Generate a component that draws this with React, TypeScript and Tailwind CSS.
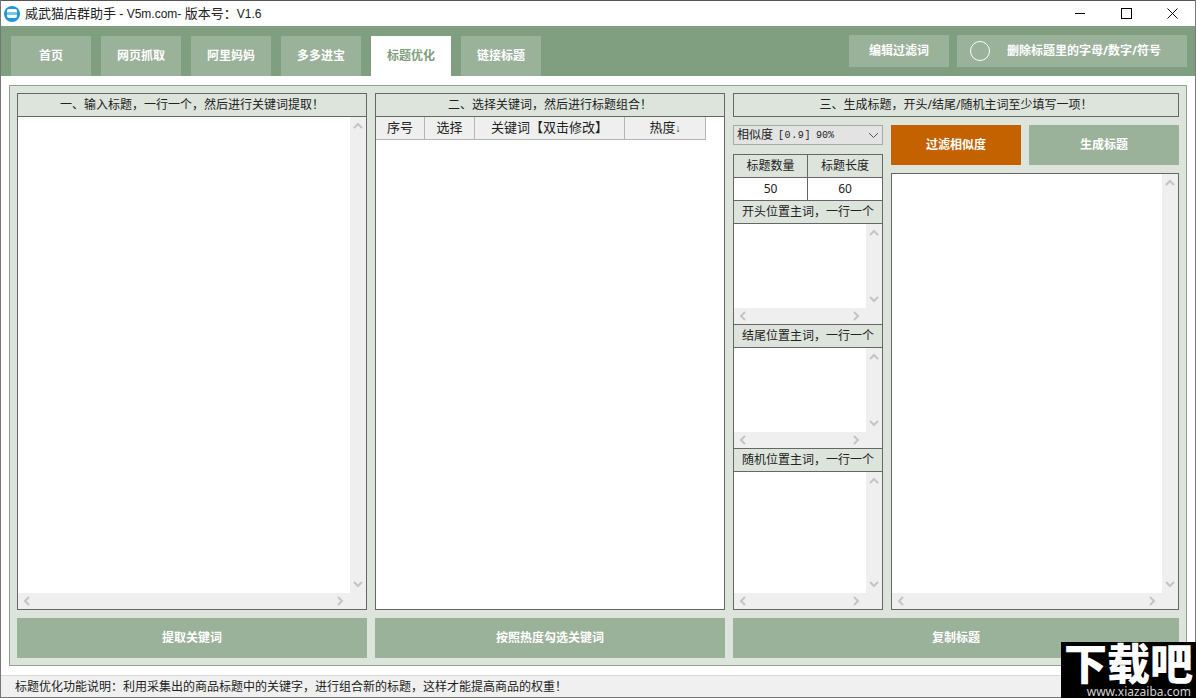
import React from "react";

const font = { fontFamily: '"Noto Sans", "Noto Sans CJK SC", sans-serif' };

function Chev({ dir }: { dir: "up" | "down" | "left" | "right" }) {
  const d = {
    up: "M1 6 L5 2 L9 6",
    down: "M1 2 L5 6 L9 2",
    left: "M6 1 L2 5 L6 9",
    right: "M2 1 L6 5 L2 9",
  }[dir];
  const vertical = dir === "up" || dir === "down";
  return (
    <svg width={vertical ? 10 : 8} height={vertical ? 8 : 10} viewBox={vertical ? "0 0 10 8" : "0 0 8 10"} fill="none" stroke="#c4c4c4" strokeWidth="2">
      <path d={d} />
    </svg>
  );
}

function ScrollBox({ className = "" }: { className?: string }) {
  return (
    <div className={`flex flex-col bg-[#efefef] border border-[#666666] min-h-0 ${className}`}>
      <div className="flex flex-1 min-h-0">
        <div className="flex-1 bg-white" />
        <div className="w-[16px] flex flex-col items-center justify-between py-[5px]">
          <Chev dir="up" />
          <Chev dir="down" />
        </div>
      </div>
      <div className="h-[16px] flex items-center justify-between pl-[5px] pr-[22px]">
        <Chev dir="left" />
        <Chev dir="right" />
      </div>
    </div>
  );
}

function Head({ children, className = "h-[24px]" }: { children: React.ReactNode; className?: string }) {
  return (
    <div className={`shrink-0 flex items-center justify-center bg-[#dde4dc] border border-[#666666] text-[12px] text-[#222222] whitespace-nowrap ${className}`}>
      {children}
    </div>
  );
}

function GreenBtn({ children, className = "" }: { children: React.ReactNode; className?: string }) {
  return (
    <div className={`flex items-center justify-center bg-[#9ab19a] text-white text-[12px] font-bold ${className}`}>
      {children}
    </div>
  );
}

function Tab({ children, active }: { children: React.ReactNode; active?: boolean }) {
  return (
    <div className={`w-[80px] h-[40px] flex items-center justify-center text-[12px] font-bold ${active ? "bg-white text-[#7f9f80]" : "bg-[#9ab19a] text-white"}`}>
      {children}
    </div>
  );
}

export default function App() {
  return (
    <div style={font} className="w-[1196px] h-[698px] flex flex-col bg-white border-x border-[#777777] relative">
      {/* title bar */}
      <div className="h-[26px] shrink-0 flex items-center bg-white border-t border-[#555555]">
        <div className="ml-[3px] w-[16px] h-[16px] rounded-full bg-[#2196d8] flex items-center justify-center">
          <div className="w-[10px] h-[9px] bg-white rounded-[2px] flex items-center">
            <div className="w-full h-[3px] bg-[#7cc4ea]" />
          </div>
        </div>
        <span className="ml-[5px] text-[12px] text-[#222222] whitespace-nowrap">
          <span className="text-[13px]">威武猫店群助手</span>
          <span className="font-['Liberation_Sans']"> - V5m.com- </span>
          <span className="text-[13px]">版本号：</span>
          <span className="font-['Liberation_Sans']">V1.6</span>
        </span>
        <div className="ml-auto flex items-center h-full">
          <div className="w-[46px] flex justify-center"><div className="w-[10px] h-px bg-black" /></div>
          <div className="w-[46px] flex justify-center"><div className="w-[11px] h-[11px] border border-black" /></div>
          <div className="w-[46px] flex justify-center">
            <svg width="11" height="11" viewBox="0 0 11 11" stroke="#111" strokeWidth="1"><path d="M0.5 0.5 L10.5 10.5 M10.5 0.5 L0.5 10.5" /></svg>
          </div>
        </div>
      </div>

      {/* tab bar */}
      <div className="h-[50px] shrink-0 bg-[#7f9f80] flex pl-[10px] pr-[8px]">
        <div className="flex items-end gap-[10px]">
          <Tab>首页</Tab>
          <Tab>网页抓取</Tab>
          <Tab>阿里妈妈</Tab>
          <Tab>多多进宝</Tab>
          <Tab active>标题优化</Tab>
          <Tab>链接标题</Tab>
        </div>
        <div className="ml-auto flex gap-[8px] pt-[9px]">
          <GreenBtn className="w-[100px] h-[32px]">编辑过滤词</GreenBtn>
          <GreenBtn className="w-[230px] h-[32px]">
            <div className="w-[20px] h-[20px] rounded-full border border-white ml-[13px] shrink-0" />
            <span className="ml-[17px] mr-auto">删除标题里的字母/数字/符号</span>
          </GreenBtn>
        </div>
      </div>

      {/* main panel */}
      <div className="flex-1 min-h-0 py-[9px] px-[8px]">
        <div className="h-full bg-[#dde4dc] border border-[#8aa88b] p-[7px] flex gap-[8px]">
          {/* col 1 */}
          <div className="w-[350px] flex flex-col">
            <Head>一、输入标题，一行一个，然后进行关键词提取！</Head>
            <ScrollBox className="flex-1 border-t-0" />
            <GreenBtn className="h-[40px] mt-[8px] shrink-0">提取关键词</GreenBtn>
          </div>

          {/* col 2 */}
          <div className="w-[350px] flex flex-col">
            <Head>二、选择关键词，然后进行标题组合！</Head>
            <div className="flex-1 bg-white border border-t-0 border-[#666666] min-h-0">
              <div className="flex h-[23px] w-[330px] bg-[#efefef] border-b border-r border-[#b5b5b5] text-[13px] text-[#222222]">
                <div className="w-[49px] flex items-center justify-center border-r border-[#b5b5b5]">序号</div>
                <div className="w-[50px] flex items-center justify-center border-r border-[#b5b5b5]">选择</div>
                <div className="w-[150px] flex items-center justify-center border-r border-[#b5b5b5] whitespace-nowrap">关键词【双击修改】</div>
                <div className="flex-1 flex items-center justify-center">
                  <span>热度</span>
                  <span className="font-['Liberation_Sans'] text-[10px]">↓</span>
                </div>
              </div>
            </div>
            <GreenBtn className="h-[40px] mt-[8px] shrink-0">按照热度勾选关键词</GreenBtn>
          </div>

          {/* col 3 */}
          <div className="flex-1 flex flex-col min-w-0">
            <Head>三、生成标题，开头/结尾/随机主词至少填写一项！</Head>
            <div className="flex-1 min-h-0 flex gap-[8px] pt-[8px]">
              <div className="w-[150px] flex flex-col min-h-0">
                <div className="h-[20px] shrink-0 bg-[#e3e3e3] border border-[#a9a9a9] flex items-center pl-[3px] pr-[3px] text-[12px] text-[#222222] whitespace-nowrap">
                  <span>相似度</span>
                  <span className="ml-[5px] font-['Liberation_Mono'] text-[10px] tracking-[0.6px]">[0.9]</span>
                  <span className="ml-[5px] font-['Liberation_Mono'] text-[10px]">90%</span>
                  <svg className="ml-auto" width="11" height="7" viewBox="0 0 11 7" fill="none" stroke="#555" strokeWidth="1"><path d="M1 1 L5.5 5.5 L10 1" /></svg>
                </div>
                <div className="mt-[9px] flex-1 min-h-0 flex flex-col">
                  <div className="flex h-[24px] shrink-0 bg-[#dde4dc] border border-[#666666] text-[12px] text-[#222222]">
                    <div className="w-[74px] flex items-center justify-center border-r border-[#666666]">标题数量</div>
                    <div className="flex-1 flex items-center justify-center">标题长度</div>
                  </div>
                  <div className="flex h-[23px] shrink-0 bg-white border-x border-b border-[#666666] text-[12px] text-[#222222]">
                    <div className="w-[74px] flex items-center justify-center border-r border-[#666666]">50</div>
                    <div className="flex-1 flex items-center justify-center">60</div>
                  </div>
                  <Head className="h-[23px] border-t-0">开头位置主词，一行一个</Head>
                  <ScrollBox className="h-[101px] shrink-0 border-t-0" />
                  <Head className="h-[23px] border-t-0">结尾位置主词，一行一个</Head>
                  <ScrollBox className="h-[101px] shrink-0 border-t-0" />
                  <Head className="h-[23px] border-t-0">随机位置主词，一行一个</Head>
                  <ScrollBox className="flex-1 border-t-0" />
                </div>
              </div>
              <div className="flex-1 min-w-0 flex flex-col">
                <div className="flex gap-[8px] h-[40px] shrink-0">
                  <div className="w-[130px] flex items-center justify-center bg-[#c46200] text-white text-[12px] font-bold">过滤相似度</div>
                  <GreenBtn className="flex-1">生成标题</GreenBtn>
                </div>
                <ScrollBox className="flex-1 mt-[8px]" />
              </div>
            </div>
            <GreenBtn className="h-[40px] mt-[8px] shrink-0">复制标题</GreenBtn>
          </div>
        </div>
      </div>

      {/* status bar */}
      <div className="h-[23px] shrink-0 bg-[#f0f0f0] border-t border-[#d8d8d8] border-b border-b-[#777777] flex items-center pl-[14px] text-[12px] text-[#222222] whitespace-nowrap">
        标题优化功能说明：利用采集出的商品标题中的关键字，进行组合新的标题，这样才能提高商品的权重！
      </div>

      {/* watermark */}
      <div className="absolute right-[-1px] bottom-0 w-[135px] h-[56px] bg-black text-white flex flex-col items-center">
        <div className="text-[43px] leading-[44px] font-black whitespace-nowrap">下载吧</div>
        <div className="text-[12px] leading-[12px] text-[#d0d0d0] whitespace-nowrap self-end pr-[5px]">www.xiazaiba.com</div>
      </div>
    </div>
  );
}
